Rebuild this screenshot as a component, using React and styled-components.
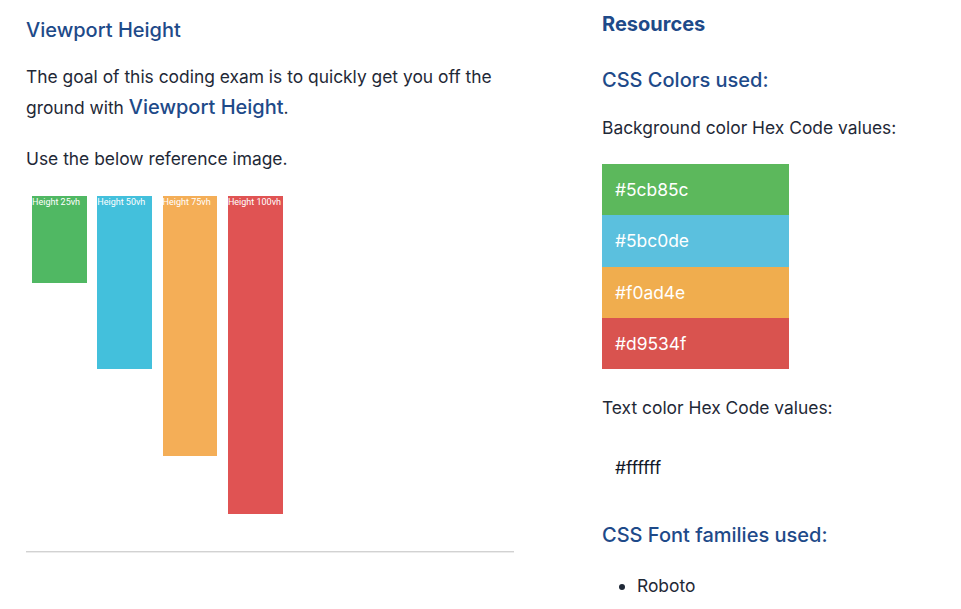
import React from "react";
import styled, { createGlobalStyle } from "styled-components";

const Global = createGlobalStyle`
  html, body { margin: 0; padding: 0; background: #ffffff; }
  body { font-family: Inter, "Noto Sans", sans-serif; color: #1f2937; }
`;

const Page = styled.div`
  display: flex;
  gap: 88px;
  padding-left: 26px;
  width: 961px;
  box-sizing: border-box;
`;

const LeftCol = styled.section`
  width: 488px;
  display: flex;
  flex-direction: column;
  padding-top: 18px;
`;

const RightCol = styled.section`
  width: 359px;
  display: flex;
  flex-direction: column;
  padding-top: 12px;
`;

const Heading = styled.h2`
  margin: ${(p) => p.$mt || 0}px 0 0 0;
  font-size: 20px;
  line-height: 24px;
  font-weight: ${(p) => (p.$bold ? 700 : 500)};
  color: #1e4a89;
`;

const Para = styled.p`
  margin: ${(p) => p.$mt || 0}px 0 0 0;
  font-size: 17.4px;
  line-height: 30px;
  color: #1f2937;
`;

const Accent = styled.span`
  font-size: 20px;
  color: #1e4a89;
  font-weight: 500;
`;

const Figure = styled.div`
  margin-top: 22px;
  padding-left: 6px;
  height: 318px;
  display: flex;
  align-items: flex-start;
  gap: 10.5px;
  overflow: hidden;
`;

const Bar = styled.div`
  width: 54.8px;
  flex: none;
  background: ${(p) => p.$color};
  color: #ffffff;
  font-family: Roboto, Arial, sans-serif;
  font-size: 9px;
  line-height: 12px;
  box-sizing: border-box;
  white-space: nowrap;
`;

const Rule = styled.hr`
  margin: 37px 0 0 0;
  height: 0;
  border: none;
  border-top: 1px solid #d2d2d2;
  border-bottom: 1px solid #ececec;
`;

const Swatches = styled.div`
  margin-top: 21px;
  width: 187px;
  display: flex;
  flex-direction: column;
`;

const Swatch = styled.div`
  height: 51.25px;
  display: flex;
  align-items: center;
  padding-left: 13px;
  background: ${(p) => p.$color};
  color: #ffffff;
  font-size: 17.4px;
`;

const TextValue = styled.div`
  margin-top: 21px;
  padding: 14px 13px;
  font-size: 17.4px;
  line-height: 20px;
  color: #111827;
`;

const List = styled.ul`
  margin: 27px 0 0 0;
  padding-left: 35px;
  font-size: 17.4px;
  line-height: 24px;
  color: #1f2937;
`;

const bars = [
  { label: "Height 25vh", color: "#50b863", h: 87 },
  { label: "Height 50vh", color: "#43c0dc", h: 173 },
  { label: "Height 75vh", color: "#f4ae57", h: 260 },
  { label: "Height 100vh", color: "#e05353", h: 346 },
];

const swatches = ["#5cb85c", "#5bc0de", "#f0ad4e", "#d9534f"];

export default function App() {
  return (
    <>
      <Global />
      <Page>
        <LeftCol>
          <Heading>Viewport Height</Heading>
          <Para $mt={20}>
            The goal of this coding exam is to quickly get you off the ground with{" "}
            <Accent>Viewport Height</Accent>.
          </Para>
          <Para $mt={21}>Use the below reference image.</Para>
          <Figure>
            {bars.map((b) => (
              <Bar key={b.label} $color={b.color} style={{ height: b.h }}>
                {b.label}
              </Bar>
            ))}
          </Figure>
          <Rule />
        </LeftCol>
        <RightCol>
          <Heading $bold>Resources</Heading>
          <Heading $mt={32}>CSS Colors used:</Heading>
          <Para $mt={21}>Background color Hex Code values:</Para>
          <Swatches>
            {swatches.map((c) => (
              <Swatch key={c} $color={c}>
                {c}
              </Swatch>
            ))}
          </Swatches>
          <Para $mt={24}>Text color Hex Code values:</Para>
          <TextValue>#ffffff</TextValue>
          <Heading $mt={31}>CSS Font families used:</Heading>
          <List>
            <li>Roboto</li>
          </List>
        </RightCol>
      </Page>
    </>
  );
}
